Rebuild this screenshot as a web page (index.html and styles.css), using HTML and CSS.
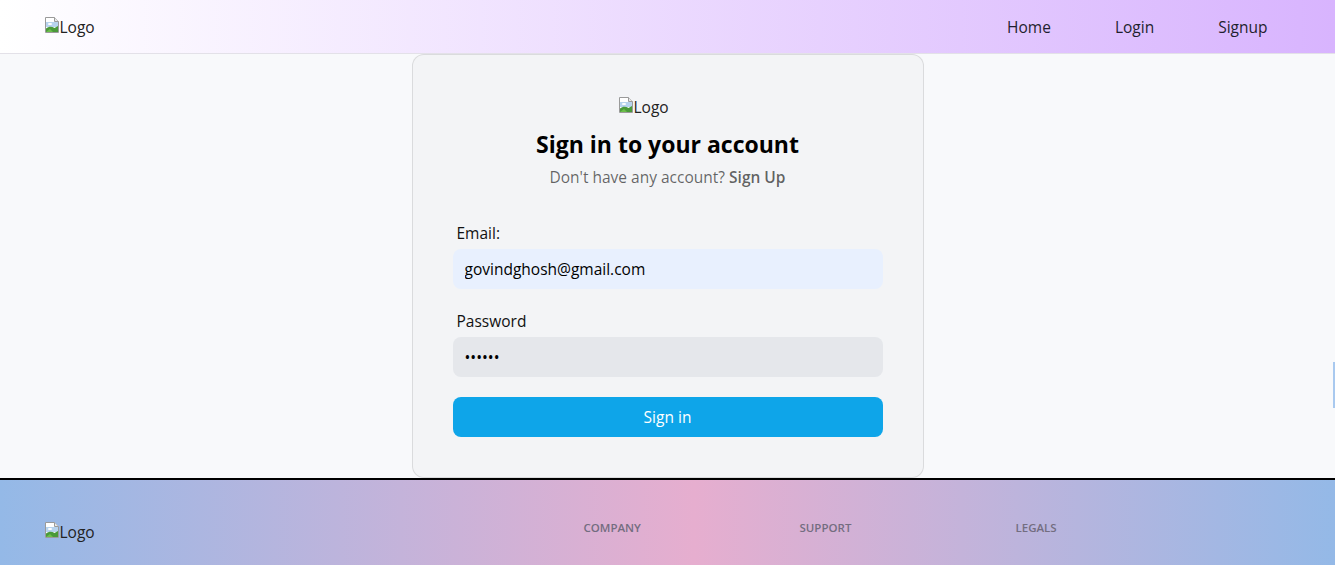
FILE: index.html
```html
<!DOCTYPE html>
<html lang="en">
<head>
<meta charset="utf-8">
<title>Sign in</title>
<link rel="stylesheet" href="styles.css">
</head>
<body>
<header class="site-header">
  <div class="container header-row">
    <a class="logo" href="#">
      <svg class="broken" viewBox="0 0 16 16" width="16" height="16" aria-hidden="true">
        <path d="M1.5 0.5h9l4 4v11h-13z" fill="#fff" stroke="#9a9a9a"/>
        <path d="M10.5 0.5v4h4" fill="#e8e8e8" stroke="#9a9a9a"/>
        <rect x="2" y="5" width="12" height="5" fill="#b7d3ee"/>
        <ellipse cx="6" cy="7" rx="2.2" ry="1" fill="#fff"/>
        <path d="M2 15V11.5C5 9 8 9.5 10.5 11L14 9v6z" fill="#4a9a3a"/>
        <path d="M2 15l4-3 3 3z" fill="#6cbf4a"/>
      </svg><span>Logo</span>
    </a>
    <nav>
      <ul class="nav-list">
        <li><a class="nav-btn" href="#">Home</a></li>
        <li><a class="nav-btn" href="#">Login</a></li>
        <li><a class="nav-btn" href="#">Signup</a></li>
      </ul>
    </nav>
  </div>
</header>

<main class="main">
  <div class="card">
    <div class="card-logo">
      <span class="logo logo-box">
        <svg class="broken" viewBox="0 0 16 16" width="16" height="16" aria-hidden="true">
          <path d="M1.5 0.5h9l4 4v11h-13z" fill="#fff" stroke="#9a9a9a"/>
          <path d="M10.5 0.5v4h4" fill="#e8e8e8" stroke="#9a9a9a"/>
          <rect x="2" y="5" width="12" height="5" fill="#b7d3ee"/>
          <ellipse cx="6" cy="7" rx="2.2" ry="1" fill="#fff"/>
          <path d="M2 15V11.5C5 9 8 9.5 10.5 11L14 9v6z" fill="#4a9a3a"/>
          <path d="M2 15l4-3 3 3z" fill="#6cbf4a"/>
        </svg><span>Logo</span>
      </span>
    </div>
    <h2 class="title">Sign in to your account</h2>
    <p class="subtitle">Don't have any account? <a class="sub-link" href="#">Sign Up</a></p>
    <form class="form">
      <div class="field">
        <label class="label" for="email">Email:</label>
        <input class="input input-auto" id="email" type="email" value="govindghosh@gmail.com">
      </div>
      <div class="field">
        <label class="label" for="password">Password</label>
        <input class="input" id="password" type="password" value="123456">
      </div>
      <button class="submit" type="button">Sign in</button>
    </form>
  </div>
</main>

<footer class="site-footer">
  <div class="container">
    <div class="footer-grid">
      <div class="fcol fcol-logo">
        <span class="logo">
          <svg class="broken" viewBox="0 0 16 16" width="16" height="16" aria-hidden="true">
            <path d="M1.5 0.5h9l4 4v11h-13z" fill="#fff" stroke="#9a9a9a"/>
            <path d="M10.5 0.5v4h4" fill="#e8e8e8" stroke="#9a9a9a"/>
            <rect x="2" y="5" width="12" height="5" fill="#b7d3ee"/>
            <ellipse cx="6" cy="7" rx="2.2" ry="1" fill="#fff"/>
            <path d="M2 15V11.5C5 9 8 9.5 10.5 11L14 9v6z" fill="#4a9a3a"/>
            <path d="M2 15l4-3 3 3z" fill="#6cbf4a"/>
          </svg><span>Logo</span>
        </span>
      </div>
      <div class="fcol fcol-2"><h3 class="fhead">Company</h3></div>
      <div class="fcol fcol-2"><h3 class="fhead">Support</h3></div>
      <div class="fcol fcol-3"><h3 class="fhead">Legals</h3></div>
    </div>
  </div>
</footer>
<div class="edge-tab"></div>
</body>
</html>
```

FILE: styles.css
```css
* { box-sizing: border-box; }
html, body { margin: 0; padding: 0; }
body {
  font-family: "Open Sans", "Noto Sans", sans-serif;
  font-size: 15.5px;
  line-height: 24px;
  color: #111;
  background: #f8f9fb;
  overflow: hidden;
}
a { color: inherit; text-decoration: none; }

.container {
  max-width: 1280px;
  margin: 0 auto;
  padding: 0 16px;
}

.site-header {
  height: 54px;
  background: linear-gradient(to right, #ffffff, #d8b4fe);
  border-bottom: 1px solid #e3e1e8;
}
.header-row {
  height: 53px;
  display: flex;
  align-items: center;
}
.logo {
  display: inline-flex;
  align-items: center;
  color: #222;
  line-height: 24px;
  height: 24px;
}
.broken { display: block; margin-top: -4px; flex-shrink: 0; }
nav { margin-left: auto; }
.nav-list {
  list-style: none;
  margin: 0;
  padding: 0;
  display: flex;
  gap: 16px;
}
.nav-btn {
  display: inline-block;
  padding: 0 24px;
  line-height: 24px;
  color: #1f1f2e;
}

.main {
  display: flex;
  justify-content: center;
}
.card {
  width: 512px;
  background: #f3f4f6;
  border: 1px solid rgba(0,0,0,0.1);
  border-radius: 12px;
  padding: 40px;
}
.card-logo {
  display: flex;
  justify-content: center;
  height: 24px;
  margin-bottom: 10px;
}
.logo-box { width: 100px; }
.title {
  margin: 0;
  text-align: center;
  font-size: 23px;
  line-height: 30px;
  font-weight: 700;
  color: #000;
}
.subtitle {
  margin: 6px 0 0;
  text-align: center;
  line-height: 24px;
  color: rgba(0,0,0,0.6);
}
.sub-link { font-weight: 600; color: rgba(0,0,0,0.62); }

.form {
  margin-top: 32px;
  display: flex;
  flex-direction: column;
  gap: 20px;
}
.field { display: flex; flex-direction: column; }
.label {
  display: block;
  height: 24px;
  padding-left: 4px;
  margin-bottom: 4px;
  color: #111;
}
.input {
  width: 100%;
  height: 40px;
  padding: 8px 12px;
  border: none;
  border-radius: 8px;
  background: #e5e7eb;
  font: inherit;
  color: #000;
  outline: none;
}
.input-auto { background: #e8f0fe; }
.submit {
  height: 40px;
  border: none;
  border-radius: 8px;
  background: #0ea5e9;
  color: #fff;
  font: inherit;
}

.site-footer {
  border-top: 2px solid #000;
  background: linear-gradient(to right, #94b9e7 0%, #c4b3da 30%, #e6aecf 52%, #c4b3da 72%, #94b9e7 100%);
  padding: 40px 0;
  height: 200px;
}
.footer-grid {
  display: flex;
  margin: 0 -24px;
}
.fcol { padding: 0 24px; flex-shrink: 0; }
.fcol-logo { width: 41.6667%; }
.fcol-2 { width: 16.6667%; }
.fcol-3 { width: 25%; }
.fhead {
  margin: 0;
  font-size: 11.5px;
  line-height: 16px;
  font-weight: 600;
  text-transform: uppercase;
  color: #736d80;
}

.edge-tab {
  position: fixed;
  right: 0;
  top: 362px;
  width: 2px;
  height: 46px;
  background: #a9c9ef;
}
```
